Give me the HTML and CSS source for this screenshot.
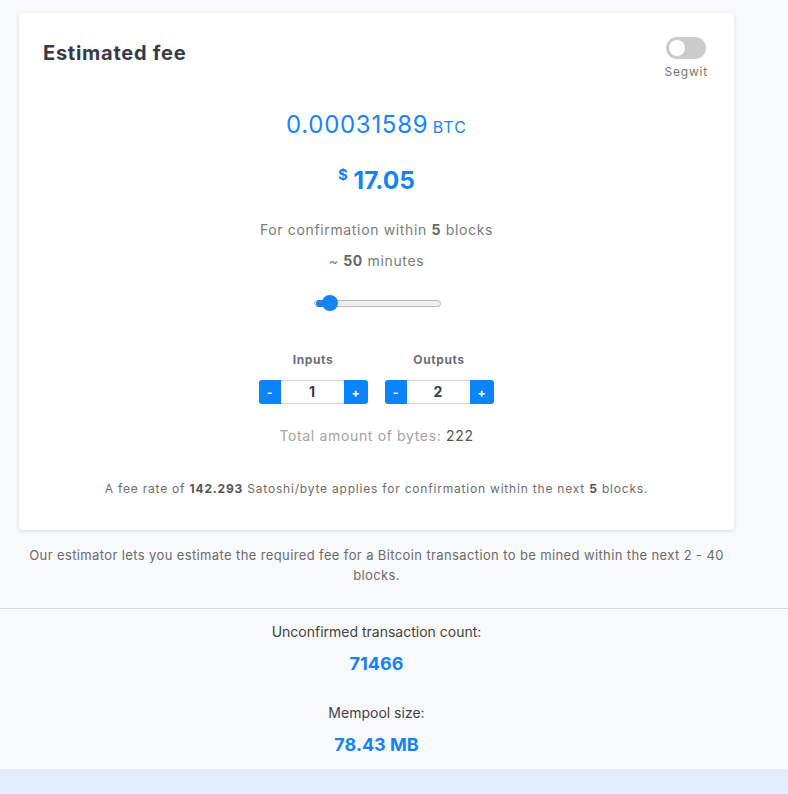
FILE: index.html
```html
<!DOCTYPE html>
<html>
<head>
<meta charset="utf-8">
<link rel="stylesheet" href="styles.css">
</head>
<body>
<div class="page">
  <div class="column">
    <div class="card">
      <div class="card-head">
        <h2 class="title">Estimated fee</h2>
        <div class="segwit">
          <span class="toggle"><span class="knob"></span></span>
          <span class="segwit-label">Segwit</span>
        </div>
      </div>
      <div class="btc"><span class="btc-num">0.00031589</span> <span class="btc-unit">BTC</span></div>
      <div class="usd"><sup class="usd-sign">$</sup> 17.05</div>
      <p class="conf">For confirmation within <b>5</b> blocks</p>
      <p class="mins">~ <b>50</b> minutes</p>
      <div class="slider-row">
        <div class="slider"><span class="thumb"></span></div>
      </div>
      <div class="counters">
        <div class="counter">
          <div class="counter-label">Inputs</div>
          <div class="spinner">
            <button class="spin-btn">-</button>
            <span class="spin-val">1</span>
            <button class="spin-btn">+</button>
          </div>
        </div>
        <div class="counter">
          <div class="counter-label">Outputs</div>
          <div class="spinner">
            <button class="spin-btn">-</button>
            <span class="spin-val">2</span>
            <button class="spin-btn">+</button>
          </div>
        </div>
      </div>
      <p class="bytes">Total amount of bytes: <span class="bytes-val">222</span></p>
      <p class="rate">A fee rate of <b>142.293</b> Satoshi/byte applies for confirmation within the next <b>5</b> blocks.</p>
    </div>
    <p class="about">Our estimator lets you estimate the required fee for a Bitcoin transaction to be mined within the next 2 - 40 blocks.</p>
  </div>
  <hr class="divider">
  <div class="column stats">
    <div class="stat-label">Unconfirmed transaction count:</div>
    <div class="stat-val">71466</div>
    <div class="stat-label second">Mempool size:</div>
    <div class="stat-val">78.43 MB</div>
  </div>
  <div class="band"></div>
</div>
</body>
</html>
```

FILE: styles.css
```css
* { box-sizing: border-box; }
html, body { margin: 0; padding: 0; }
body {
  background: #f8f9fb;
  font-family: Inter, "Noto Sans", sans-serif;
  color: #555;
}
.page { width: 788px; }
.column {
  width: 753px;
  padding: 13px 19px 0;
}
.card {
  background: #fff;
  border-radius: 4px;
  box-shadow: 0 1px 4px rgba(0,0,0,0.12);
  padding: 24px 24px 33px;
  text-align: center;
  height: 517px;
}
.card-head {
  display: flex;
  justify-content: space-between;
  align-items: flex-start;
}
.title {
  margin: 4px 0 0;
  font-size: 20px;
  font-weight: 700;
  color: #363a47;
  letter-spacing: 0.75px;
}
.segwit {
  display: flex;
  flex-direction: column;
  align-items: center;
  margin-right: 2px;
}
.toggle {
  width: 40px;
  height: 22px;
  border-radius: 11px;
  background: #cbcbcb;
  position: relative;
}
.knob {
  position: absolute;
  left: 3px;
  top: 3px;
  width: 16px;
  height: 16px;
  border-radius: 50%;
  background: #fff;
}
.segwit-label {
  margin-top: 5px;
  font-size: 12px;
  color: #777;
  letter-spacing: 0.8px;
}
.btc {
  margin-top: 31px;
  color: #1b84f5;
  line-height: 30px;
}
.btc-num { font-size: 24px; font-weight: 400; letter-spacing: 0.7px; }
.btc-unit { font-size: 16px; letter-spacing: 1px; }
.usd {
  margin-top: 23px;
  color: #1583f6;
  font-size: 24.5px;
  font-weight: 700;
  line-height: 30px;
}
.usd-sign { font-size: 15px; vertical-align: 9px; line-height: 0; }
.conf, .mins {
  margin: 0;
  font-size: 14px;
  color: #7b7b7b;
  letter-spacing: 0.65px;
  line-height: 20px;
}
.conf { margin-top: 25px; }
.mins { margin-top: 11px; }
.conf b, .mins b { color: #666; }
.slider-row {
  display: flex;
  justify-content: center;
  margin-top: 29px;
}
.slider {
  position: relative;
  width: 127px;
  height: 7px;
  border: 1px solid #b8b8b8;
  border-radius: 4px;
  background: #efefef;
  margin-left: 1px;
}
.thumb {
  position: absolute;
  left: 7px;
  top: -6px;
  width: 16px;
  height: 16px;
  border-radius: 50%;
  background: #1583f6;
}
.thumb::before {
  content: "";
  position: absolute;
  right: 12px;
  top: 5px;
  width: 10px;
  height: 7px;
  border-radius: 4px 0 0 4px;
  background: #1583f6;
}
.counters {
  display: flex;
  justify-content: center;
  gap: 17px;
  margin-top: 45px;
  margin-left: -1px;
}
.counter-label {
  font-size: 12px;
  font-weight: 700;
  color: #6c6f78;
  letter-spacing: 0.6px;
  line-height: 16px;
}
.spinner {
  display: flex;
  margin-top: 12px;
  height: 24px;
}
.spin-btn {
  border: 0;
  margin: 0;
  padding: 0;
  width: 22px;
  height: 24px;
  background: #0a84fb;
  color: #fff;
  font-family: Inter, sans-serif;
  font-weight: 700;
  font-size: 12px;
  border-radius: 3px 0 0 3px;
}
.spin-btn:last-child { width: 24px; border-radius: 0 3px 3px 0; }
.spin-val {
  width: 63px;
  border: 1px solid #cfd3dc;
  border-left: 0;
  border-right: 0;
  font-size: 14px;
  font-weight: 700;
  color: #3a3d48;
  line-height: 22px;
}
.bytes {
  margin: 22px 0 0;
  font-size: 14px;
  color: #a4a4a4;
  letter-spacing: 0.65px;
  line-height: 20px;
}
.bytes-val { color: #555; }
.rate {
  margin: 35px 0 0;
  font-size: 12px;
  color: #6d6d6d;
  letter-spacing: 0.8px;
  line-height: 16px;
}
.rate b { color: #555; }
.about {
  margin: 15px 6px 0;
  font-size: 13px;
  line-height: 20px;
  color: #6b6b6b;
  text-align: center;
  letter-spacing: 0.38px;
}
.divider {
  margin: 23px 0 0;
  border: 0;
  border-top: 1px solid #d5d7dd;
}
.stats {
  text-align: center;
  padding-top: 14px;
  padding-bottom: 14px;
}
.stat-label {
  font-size: 14px;
  color: #444;
  line-height: 18px;
}
.stat-label.second { margin-top: 30px; }
.stat-val {
  margin-top: 13px;
  font-size: 18px;
  font-weight: 700;
  color: #1583f6;
  line-height: 20px;
}
.band {
  height: 40px;
  background: #e2eefd;
}
```
